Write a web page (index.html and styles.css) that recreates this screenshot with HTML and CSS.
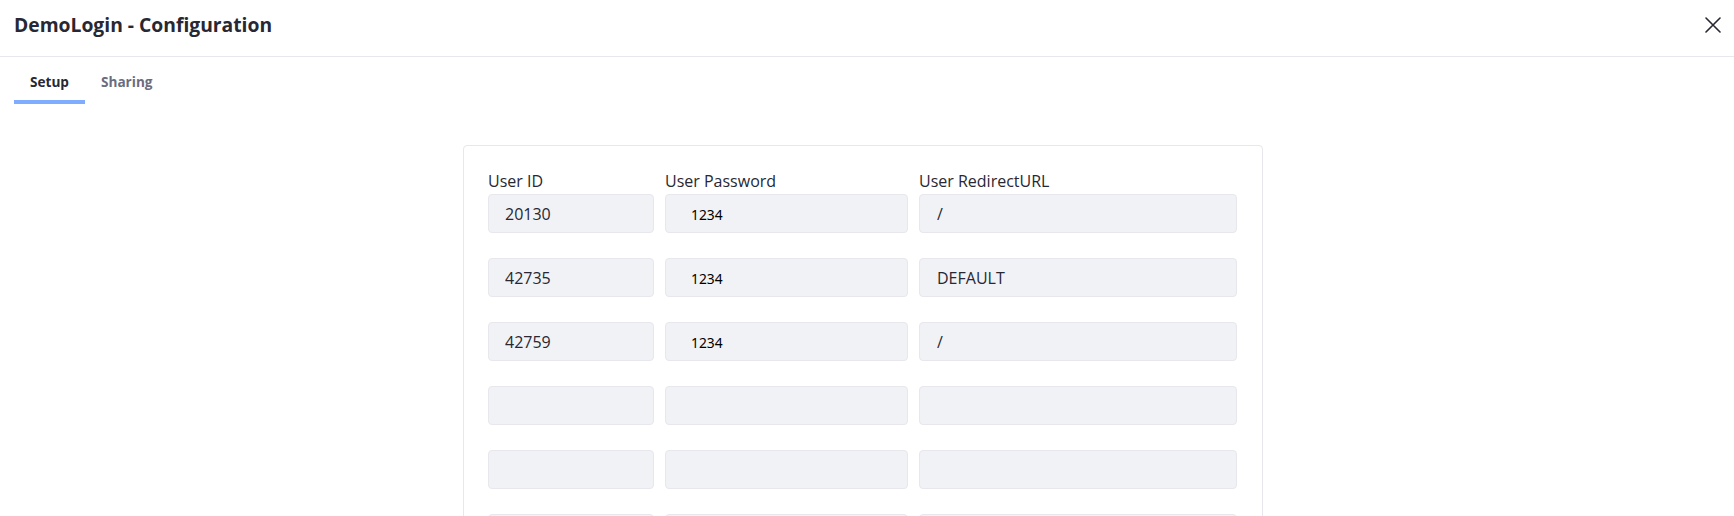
FILE: index.html
```html
<!DOCTYPE html>
<html lang="en">
<head>
<meta charset="utf-8">
<title>DemoLogin - Configuration</title>
<link rel="stylesheet" href="styles.css">
</head>
<body>
<header class="modal-header">
  <h1 class="modal-title">DemoLogin - Configuration</h1>
  <button class="close" type="button" aria-label="Close">
    <svg viewBox="0 0 16 16" width="16" height="16"><path d="M1 1 L15 15 M15 1 L1 15" stroke="#272833" stroke-width="1.6" fill="none" stroke-linecap="round"/></svg>
  </button>
</header>
<nav class="tabs">
  <a class="tab active">Setup</a>
  <a class="tab">Sharing</a>
</nav>
<main class="content">
  <section class="card">
    <div class="grid labels">
      <label class="lbl">User ID</label>
      <label class="lbl">User Password</label>
      <label class="lbl">User RedirectURL</label>
    </div>
    <div class="grid rows">
      <input class="field id" readonly value="20130">
      <input class="field pw" readonly value="1234">
      <input class="field url" readonly value="/">

      <input class="field id" readonly value="42735">
      <input class="field pw" readonly value="1234">
      <input class="field url" readonly value="DEFAULT">

      <input class="field id" readonly value="42759">
      <input class="field pw" readonly value="1234">
      <input class="field url" readonly value="/">

      <input class="field id" readonly value="">
      <input class="field pw" readonly value="">
      <input class="field url" readonly value="">

      <input class="field id" readonly value="">
      <input class="field pw" readonly value="">
      <input class="field url" readonly value="">

      <input class="field id" readonly value="">
      <input class="field pw" readonly value="">
      <input class="field url" readonly value="">
    </div>
  </section>
</main>
</body>
</html>
```
FILE: styles.css
```css
html, body {
  margin: 0;
  padding: 0;
  background: #ffffff;
}
body {
  font-family: "Open Sans", "Noto Sans", sans-serif;
  color: #272833;
  overflow: hidden;
  height: 516px;
}
.modal-header {
  height: 56px;
  border-bottom: 1px solid #e7e7ed;
  display: flex;
  align-items: center;
  justify-content: space-between;
  padding: 0 13px 0 14px;
}
.modal-title {
  margin: 0;
  font-size: 19.3px;
  font-weight: 700;
  line-height: 1;
  color: #272833;
  position: relative;
  top: -3px;
}
.close {
  border: 0;
  background: none;
  padding: 0;
  width: 16px;
  height: 16px;
  display: flex;
  position: relative;
  top: -3px;
}
.tabs {
  display: flex;
  padding: 0 14px;
  height: 47px;
}
.tab {
  padding: 5px 16px 0;
  display: flex;
  align-items: center;
  font-size: 13.6px;
  font-weight: 700;
  color: #6b6c7e;
  border-bottom: 4px solid transparent;
  box-sizing: border-box;
  height: 47px;
}
.tab.active {
  color: #272833;
  border-bottom-color: #80acff;
}
.content {
  display: flex;
  justify-content: center;
  padding: 41px 8px 0 0;
}
.card {
  width: 800px;
  box-sizing: border-box;
  border: 1px solid #e7e7ed;
  border-radius: 4px;
  padding: 24px 24px 24px 24px;
}
.grid {
  display: grid;
  grid-template-columns: 166px 243px 318px;
  column-gap: 11px;
}
.labels {
  margin-bottom: 2px;
}
.rows {
  row-gap: 25px;
}
.lbl {
  font-size: 16px;
  line-height: 22px;
  color: #272833;
}
.field {
  box-sizing: border-box;
  height: 39px;
  width: 100%;
  margin: 0;
  border: 1px solid #e7e7ed;
  border-radius: 4px;
  background: #f1f2f5;
  font-family: "Open Sans", "Noto Sans", sans-serif;
  font-size: 16px;
  color: #272833;
  padding: 0 8px 0 16px;
  outline: none;
}
.field.pw {
  font-family: "Noto Sans", sans-serif;
  font-size: 13.8px;
  color: #000000;
  padding-left: 25px;
  padding-top: 2px;
}
.field.url {
  padding-left: 17px;
}
```
